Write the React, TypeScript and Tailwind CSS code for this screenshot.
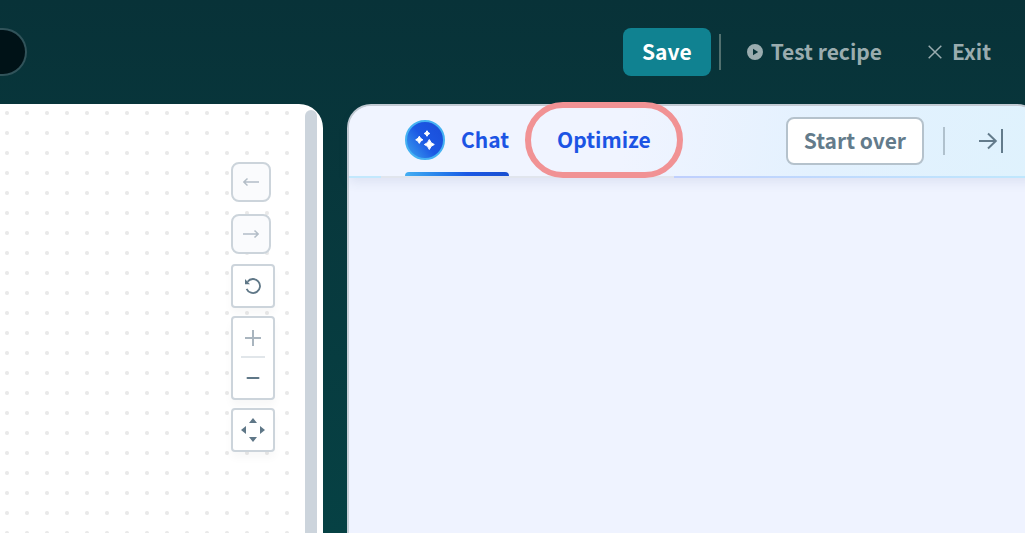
import { useState } from "react";
import type { ReactNode } from "react";

type Tab = "chat" | "optimize";

type ControlProps = {
  label: string;
  children: ReactNode;
};

function HistoryButton({ label, children }: ControlProps) {
  return (
    <button
      type="button"
      aria-label={label}
      className="flex size-10 items-center justify-center rounded-lg border-2 border-[#ccd4db] bg-[#fafbfd] text-[#b3bdc7]"
    >
      {children}
    </button>
  );
}

function BoxButton({ label, children }: ControlProps) {
  return (
    <button
      type="button"
      aria-label={label}
      className="flex size-11 items-center justify-center rounded-sm border-2 border-[#ccd4db] bg-white text-[#5f7787] shadow-[0_6px_8px_rgba(0,0,0,0.03)]"
    >
      {children}
    </button>
  );
}

function CanvasControls() {
  return (
    <div className="flex flex-col items-start">
      <div className="flex flex-col gap-3">
        <HistoryButton label="Undo">
          <svg width="16" height="10" viewBox="0 0 16 10" fill="none" stroke="currentColor" strokeWidth="1.5">
            <path d="M16 5H1M4.5 1.5L0.8 5l3.7 3.5" />
          </svg>
        </HistoryButton>
        <HistoryButton label="Redo">
          <svg width="16" height="10" viewBox="0 0 16 10" fill="none" stroke="currentColor" strokeWidth="1.5">
            <path d="M0 5h15M11.5 1.5L15.2 5l-3.7 3.5" />
          </svg>
        </HistoryButton>
      </div>
      <div className="mt-2.5 flex flex-col gap-2">
        <BoxButton label="Reset view">
          <svg width="16" height="16" viewBox="0 0 16 16" fill="none">
            <path d="M2.5 3.7A7 7 0 1 1 1.6 10.8" stroke="currentColor" strokeWidth="1.8" />
            <path d="M0 1v5.2h5z" fill="currentColor" />
          </svg>
        </BoxButton>
        <div className="flex w-11 flex-col items-center rounded-sm border-2 border-[#ccd4db] bg-white shadow-[0_6px_8px_rgba(0,0,0,0.03)]">
          <button
            type="button"
            aria-label="Zoom in"
            className="flex h-10 w-6 items-center justify-center border-b-2 border-[#e1e6ea] pt-0.5 text-[#a9b5bf]"
          >
            <svg width="16" height="16" viewBox="0 0 16 16" stroke="currentColor" strokeWidth="2">
              <path d="M8 0v16M0 8h16" />
            </svg>
          </button>
          <button
            type="button"
            aria-label="Zoom out"
            className="flex h-10 w-6 items-center justify-center text-[#5f7787]"
          >
            <svg width="14" height="14" viewBox="0 0 14 14" stroke="currentColor" strokeWidth="2" strokeLinecap="round">
              <path d="M1.5 7h11" />
            </svg>
          </button>
        </div>
        <BoxButton label="Fit to screen">
          <svg width="24" height="24" viewBox="0 0 24 24" fill="currentColor">
            <path d="M12 0L16 5H8zM12 24L16 19H8zM0 12L5 8v8zM24 12L19 8v8z" />
          </svg>
        </BoxButton>
      </div>
    </div>
  );
}

function TopBar() {
  return (
    <header className="flex h-[104px] items-center justify-between pr-[34px]">
      <div className="h-12 w-[27px] rounded-r-full border-2 border-l-0 border-[#31535a] bg-[#001217]" />
      <div className="flex items-center text-[21px] leading-8 font-bold text-[#9aacaf]">
        <button type="button" className="h-12 rounded-lg bg-[#108291] px-[19px] pb-0.5 text-white">
          Save
        </button>
        <div className="ml-2 h-9 w-0.5 bg-[#52706f]" />
        <button type="button" className="ml-[26px] flex items-center gap-2">
          <svg width="16" height="16" viewBox="0 0 16 16" fill="currentColor">
            <path fillRule="evenodd" d="M8 0a8 8 0 1 0 0 16A8 8 0 0 0 8 0zM6 4.8L11.2 8 6 11.2z" />
          </svg>
          <span className="pb-0.5">Test recipe</span>
        </button>
        <button type="button" className="ml-[46px] flex items-center gap-2.5">
          <svg width="14" height="14" viewBox="0 0 14 14" fill="none" stroke="currentColor" strokeWidth="1.5">
            <path d="M0.7 0.7l12.6 12.6M13.3 0.7L0.7 13.3" />
          </svg>
          <span className="pb-0.5">Exit</span>
        </button>
      </div>
    </header>
  );
}

function SparkleBadge() {
  return (
    <svg width="40" height="40" viewBox="0 0 40 40">
      <defs>
        <linearGradient id="badgeFill" x1="0" y1="0.9" x2="0.9" y2="0.2">
          <stop offset="0" stopColor="#3aa0ee" />
          <stop offset="0.55" stopColor="#1c58e4" />
          <stop offset="1" stopColor="#1a4fdb" />
        </linearGradient>
      </defs>
      <circle cx="20" cy="20" r="19" fill="url(#badgeFill)" stroke="#45b1f2" strokeWidth="2" />
      <g fill="#fff" stroke="#fff" strokeWidth="1" strokeLinejoin="round">
        <path d="M24.3 19.5q1.2 3.800 5 5-3.800 1.200-5 5-1.200-3.800-5-5 3.800-1.200 5-5z" />
        <path d="M14.3 16.2q0.900 2.700 3.600 3.600-2.700 0.900-3.600 3.600-0.900-2.700-3.600-3.600 2.700-0.900 3.600-3.600z" />
        <path d="M22 10.700q0.700 2.100 2.800 2.800-2.100 0.700-2.800 2.800-0.700-2.100-2.800-2.800 2.100-0.700 2.800-2.800z" />
      </g>
    </svg>
  );
}

function AssistantPanel() {
  const [tab, setTab] = useState<Tab>("chat");

  return (
    <section className="-mr-4 flex flex-col rounded-t-3xl border-2 border-b-0 border-[#c6ced6] bg-[#eff3ff]">
      <div className="rounded-t-[22px] bg-[linear-gradient(100deg,#f0f4ff_40%,#e3f1fe_68%,#dff2fd_100%)] shadow-[0_4px_12px_rgba(60,80,130,0.10)]">
        <div className="flex h-[70px] items-center justify-between pr-9 pl-14">
          <nav className="flex h-full gap-12 text-[21px] leading-8 font-bold text-[#1c54e4]">
            <button type="button" onClick={() => setTab("chat")} className="flex h-full flex-col">
              <span className="flex flex-1 items-center gap-4 pt-0.5">
                <SparkleBadge />
                <span className="pb-0.5">Chat</span>
              </span>
              {tab === "chat" && (
                <span className="h-1 w-full rounded-t-sm bg-linear-to-r from-[#45aef2] via-[#1c58e4] via-60% to-[#1a4fd0]" />
              )}
            </button>
            <button type="button" onClick={() => setTab("optimize")} className="relative flex h-full flex-col">
              <span className="flex flex-1 items-center pb-1">Optimize</span>
              {tab === "optimize" && <span className="h-1 w-full rounded-t-sm bg-[#1c58e4]" />}
              <span className="pointer-events-none absolute -inset-x-8 -top-1 -bottom-0.5 rounded-full border-[6px] border-[#f19294]" />
            </button>
          </nav>
          <div className="flex items-center">
            <button
              type="button"
              className="h-12 rounded-lg border-2 border-[#b5c2cc] bg-white px-4 pb-0.5 text-[21px] leading-8 font-bold text-[#637b8b]"
            >
              Start over
            </button>
            <div className="ml-[19px] h-7 w-0.5 bg-[#b0c1cd]" />
            <button type="button" aria-label="Collapse panel" className="ml-[34px] text-[#637b8b]">
              <svg width="24" height="24" viewBox="0 0 24 24" fill="none" stroke="currentColor" strokeWidth="2">
                <path d="M0 12h17M9 4.5L16.8 12l-7.8 7.5M23 0v24" />
              </svg>
            </button>
          </div>
        </div>
        <div className="h-0.5 bg-[linear-gradient(90deg,#c3e8fd_0px,#c3e8fd_32px,#e1e5ed_32px,#e1e5ed_325px,#bfcffd_325px,#c0e8fd_100%)]" />
      </div>
    </section>
  );
}

export default function App() {
  return (
    <div className="flex min-h-screen flex-col overflow-hidden bg-linear-to-b from-[#083238] to-[#064144] font-['Noto_Sans_CJK_SC','Noto_Sans',sans-serif]">
      <TopBar />
      <main className="grid flex-1 grid-cols-[323fr_678fr] gap-6">
        <section className="flex overflow-hidden rounded-tr-3xl bg-white pr-1.5">
          <div className="flex flex-1 justify-end bg-[radial-gradient(circle,#e9e9e9_1.5px,transparent_2.5px)] bg-size-[20px_20px] bg-position-[-3px_-1px] pt-[58px] pr-[30px]">
            <CanvasControls />
          </div>
          <div className="mt-1.5 w-3 rounded-t-full bg-[#ccd4dc]" />
        </section>
        <AssistantPanel />
      </main>
    </div>
  );
}
